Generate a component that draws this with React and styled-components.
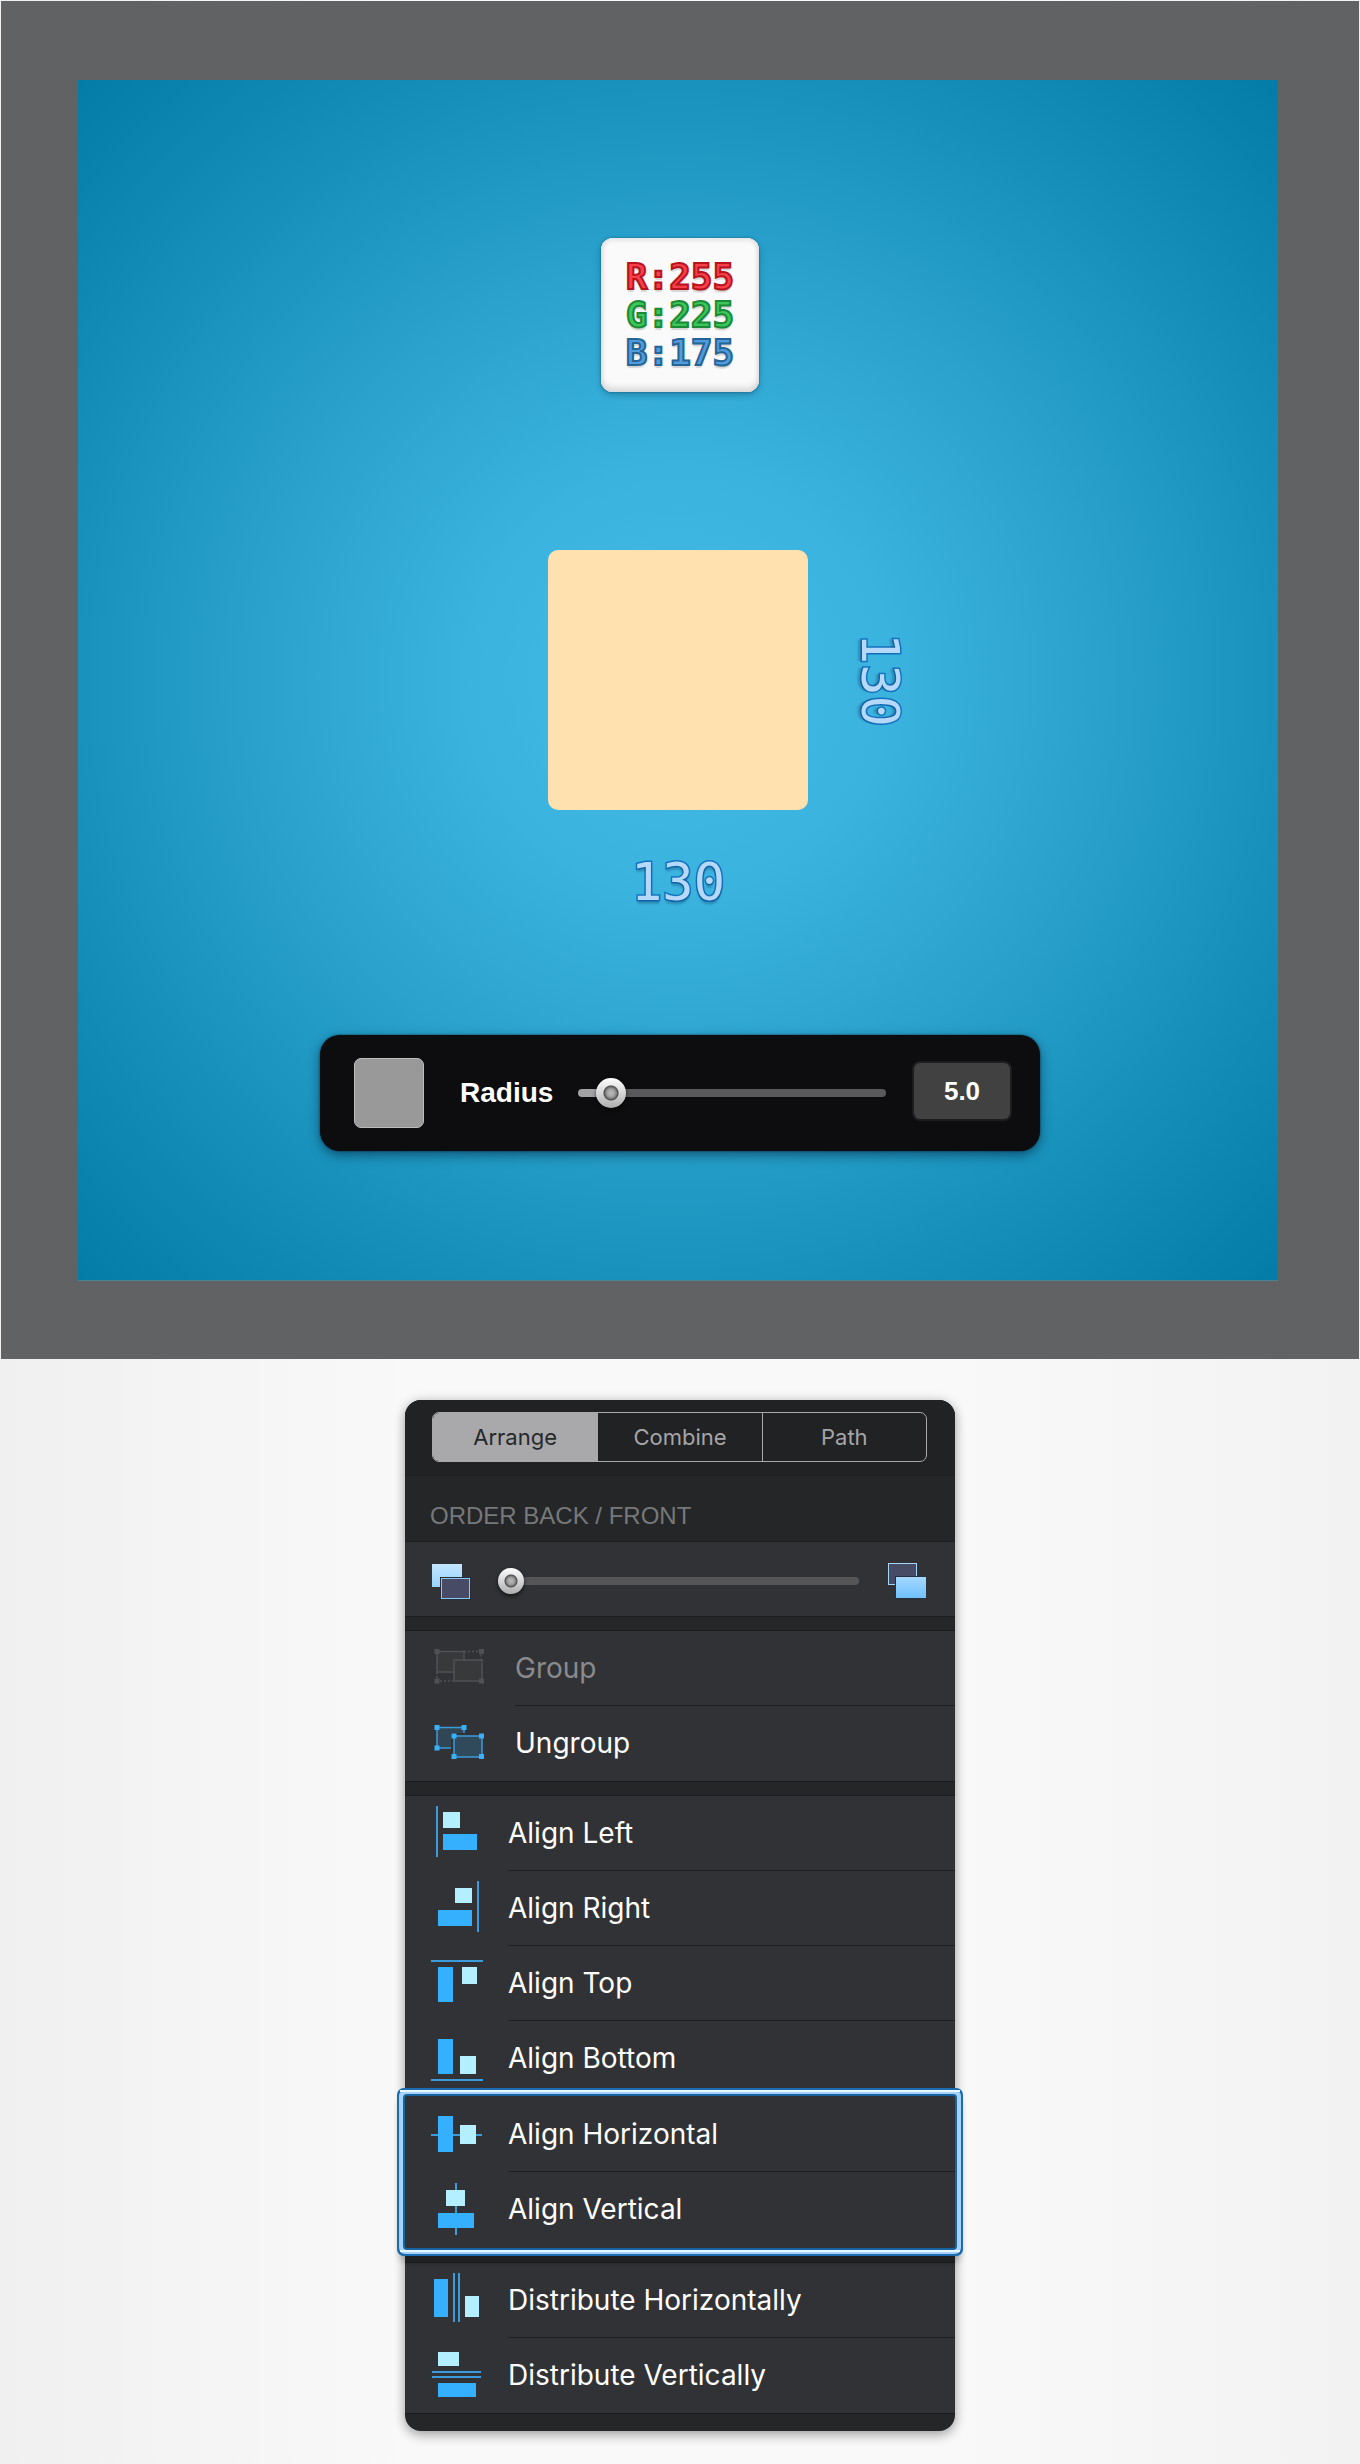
import React, { useState } from "react";
import styled, { createGlobalStyle, css } from "styled-components";

const GlobalStyle = createGlobalStyle`
  *, *::before, *::after { box-sizing: border-box; }
  body {
    margin: 0;
    font-family: Inter, "Liberation Sans", sans-serif;
    background: linear-gradient(90deg, #f0f0f0, #f9f9f9 30%, #f9f9f9 70%, #f2f2f2);
  }
  button, input { font: inherit; margin: 0; }
`;

const Page = styled.main`
  display: flex;
  flex-direction: column;
  align-items: center;
  gap: 41px;
  padding: 1px 1px 32px;
`;

const Stage = styled.section`
  width: 100%;
  padding: 79px 81px 79px 77px;
  background: #616264;
`;

const Canvas = styled.div`
  display: flex;
  flex-direction: column;
  align-items: center;
  padding: 158px 0 129px 4px;
  background: radial-gradient(circle farthest-corner at 50% 50%, #43bbe7 0%, #3bb3df 25%, #29a1cc 50%, #158fb9 75%, #037da8 100%);
  box-shadow: 0 1px 0 #4d8296;
`;

const ColorCard = styled.div`
  display: flex;
  flex-direction: column;
  align-items: center;
  justify-content: center;
  width: 158px;
  height: 154px;
  border-radius: 12px;
  background: #fafafa;
  box-shadow: inset 0 -4px 6px #d8d8d8, inset 0 4px 3px #ececec, inset 2px 0 3px #e8e8e8,
    inset -2px 0 3px #e8e8e8, 0 0 2px rgba(0, 60, 90, 0.7), 0 3px 6px rgba(0, 40, 60, 0.3);
`;

const Outlined = styled.span`
  font-family: "DejaVu Sans Mono", monospace;
  color: ${(p) => p.$fill};
`;

const Channel = styled(Outlined)`
  font-size: 36px;
  line-height: 38px;
  font-weight: 700;
  -webkit-text-stroke: 2px ${(p) => p.$edge};
  text-shadow: 0 3px 1px rgba(0, 0, 0, 0.15);
`;

const Figure = styled.div`
  display: grid;
  grid-template-columns: 60px 260px 60px;
  gap: 42px;
  margin: 158px 4px 123px 0;
  justify-items: center;
  align-items: center;
`;

const Shape = styled.div`
  grid-column: 2;
  width: 260px;
  height: 260px;
  border-radius: 10px;
  background: #ffe1af;
`;

const Dimension = styled(Outlined)`
  font-size: 52px;
  line-height: 60px;
  -webkit-text-stroke: 3px ${(p) => p.$edge};
  paint-order: stroke fill;
  text-shadow: 0 4px 2px rgba(0, 40, 80, 0.25);
  ${(p) =>
    p.$vertical
      ? css`
          writing-mode: vertical-rl;
          text-orientation: sideways;
        `
      : css`
          grid-column: 2;
        `}
`;

const RadiusBar = styled.div`
  display: flex;
  align-items: center;
  width: 100%;
  max-width: 720px;
  height: 116px;
  padding: 0 30px 0 34px;
  border-radius: 20px;
  background: #0d0d0f;
  box-shadow: 0 0 2px rgba(0, 20, 30, 0.8), 0 4px 12px rgba(0, 20, 40, 0.5);
  color: #fff;
  font-family: "Liberation Sans", Arial, sans-serif;
  font-weight: 700;
`;

const Swatch = styled.button`
  flex: none;
  width: 70px;
  height: 70px;
  padding: 0;
  border: 1px solid #bcbcbc;
  border-radius: 7px;
  background: #999;
`;

const RadiusLabel = styled.label`
  margin: 0 25px 0 36px;
  font-size: 28px;
  line-height: 32px;
`;

const thumb = css`
  appearance: none;
  width: ${(p) => p.$thumb}px;
  height: ${(p) => p.$thumb}px;
  border: 0;
  border-radius: 50%;
  background: radial-gradient(circle closest-side, #bcbcbc 0%, #a0a0a0 26%, #777 38%, #4c4c4c 46%, transparent 54%),
    linear-gradient(#fff, #adadad);
  box-shadow: 0 2px 4px rgba(0, 0, 0, 0.6);
`;

const Slider = styled.input.attrs({ type: "range" })`
  appearance: none;
  flex: 1;
  min-width: 0;
  height: ${(p) => p.$thumb}px;
  background: transparent;
  &::-webkit-slider-runnable-track {
    height: 8px;
    border-radius: 4px;
    background: ${(p) =>
      `linear-gradient(90deg, ${p.$filled} ${p.$percent}%, ${p.$track} ${p.$percent}%)`};
  }
  &::-webkit-slider-thumb {
    ${thumb}
    margin-top: ${(p) => (8 - p.$thumb) / 2}px;
  }
`;

const ValueField = styled.input`
  flex: none;
  width: 96px;
  height: 56px;
  margin: 0 0 4px 28px;
  padding: 0;
  border: 0;
  border-radius: 6px;
  background: #414141;
  box-shadow: 0 0 0 2px #1d1d1f;
  color: #fff;
  font-size: 26px;
  text-align: center;
`;

const Panel = styled.section`
  width: 100%;
  max-width: 550px;
  border-radius: 16px;
  background: #252628;
  box-shadow: 0 2px 12px rgba(0, 0, 0, 0.3), 0 6px 12px rgba(0, 0, 0, 0.12);
`;

const PanelHeader = styled.header`
  padding: 12px 28px 13px 27px;
  border-bottom: 1px solid #1e1f20;
  border-radius: 16px 16px 0 0;
  background: #212224;
`;

const Segments = styled.div`
  display: grid;
  grid-template-columns: repeat(3, 1fr);
  height: 50px;
  border: 1px solid #a9a9ab;
  border-radius: 7px;
  overflow: hidden;
`;

const Segment = styled.button`
  padding: 0;
  border: 0;
  background: ${(p) => (p.$active ? "#a9a9ab" : "transparent")};
  color: ${(p) => (p.$active ? "#27282a" : "#a5a5a7")};
  font-size: 22px;
  & + & {
    border-left: 1px solid #a9a9ab;
  }
`;

const SectionTitle = styled.h2`
  margin: 0;
  height: 66px;
  padding: 26px 25px 0;
  border-bottom: 1px solid #1b1c1d;
  color: #77787a;
  font-family: "Liberation Sans", Arial, sans-serif;
  font-size: 24px;
  font-weight: 400;
  line-height: 28px;
`;

const OrderRow = styled.div`
  display: flex;
  align-items: center;
  height: 74px;
  padding: 4px 29px 0 26px;
  gap: 27px;
  background: #313235;
`;

const Divider = styled.div`
  height: 15px;
  border: solid #1b1c1d;
  border-width: 1px 0;
`;

const Footer = styled.div`
  height: 18px;
  border-top: 1px solid #1b1c1d;
`;

const ActionList = styled.div`
  background: #313235;
`;

const Highlight = styled(ActionList)`
  position: relative;
  padding: 1px 0;
  border-radius: 2px;
  box-shadow: 0 0 0 2px #17639f, 0 0 0 6px #a6d1fb, 0 0 0 8px #1b6cb0, 0 8px 6px 6px rgba(0, 0, 0, 0.2);
  &::after {
    content: "";
    position: absolute;
    inset: -6px -5px -4px;
    border: solid #e9f8ff;
    border-width: 2px 0;
    pointer-events: none;
  }
`;

const ActionButton = styled.button`
  display: flex;
  align-items: center;
  width: 100%;
  height: 75px;
  padding: 0 0 0 25px;
  gap: ${(p) => (p.$wide ? 29 : 22)}px;
  border: 0;
  background: transparent;
  color: ${(p) => (p.disabled ? "#8a8a8d" : "#fff")};
  font-size: 28px;
  text-align: left;
`;

const ActionLabel = styled.span`
  flex: 1;
  line-height: 74px;
  border-bottom: 1px solid ${(p) => (p.$last ? "transparent" : "#1d1e20")};
`;

const IconBox = styled.svg`
  flex: none;
  display: block;
`;

const BLUE = "#35afff";
const PALE = "#b3efff";
const LINE = "#3b9bdb";

/* Each alignment icon: [x, y, width, height, colour] */
const barIcons = {
  left: [[6, 10, 2, 51, LINE], [13, 16, 17, 16, PALE], [13, 38, 34, 16, BLUE]],
  right: [[47, 10, 2, 51, LINE], [25, 17, 17, 15, PALE], [8, 39, 34, 16, BLUE]],
  top: [[1, 14, 52, 2, LINE], [8, 21, 15, 35, BLUE], [32, 21, 15, 17, PALE]],
  bottom: [[8, 18, 15, 35, BLUE], [30, 35, 16, 18, PALE], [1, 58, 52, 2, LINE]],
  horizontal: [[1, 37, 51, 2, LINE], [8, 19, 15, 36, BLUE], [30, 28, 16, 19, PALE]],
  vertical: [[25, 11, 2, 52, LINE], [16, 18, 19, 16, PALE], [8, 41, 36, 15, BLUE]],
  spreadX: [[4, 16, 14, 38, BLUE], [23, 10, 2, 49, LINE], [28, 10, 2, 49, LINE], [35, 33, 14, 21, PALE]],
  spreadY: [[8, 14, 21, 14, PALE], [2, 33, 49, 2, LINE], [2, 38, 49, 2, LINE], [8, 45, 38, 14, BLUE]],
};

function BarIcon({ name }) {
  return (
    <IconBox width="56" height="75" viewBox="0 0 56 75" aria-hidden="true">
      {barIcons[name].map(([x, y, w, h, fill]) => (
        <rect key={`${x}-${y}`} x={x} y={y} width={w} height={h} fill={fill} />
      ))}
    </IconBox>
  );
}

function Handles({ points, fill }) {
  return points.map(([x, y]) => (
    <rect key={`${x}-${y}`} x={x - 2.5} y={y - 2.5} width="5" height="5" fill={fill} />
  ));
}

function GroupIcon() {
  return (
    <IconBox width="56" height="75" viewBox="0 0 56 75" aria-hidden="true">
      <g fill="#38393b" stroke="#505153" strokeWidth="1.5">
        <rect x="7" y="20.5" width="27" height="20.5" />
        <rect x="24" y="29" width="28" height="21" />
        <path d="M34 20.5H51V29M7 41V50H24" fill="none" strokeDasharray="2 2" />
      </g>
      <Handles fill="#505153" points={[[7, 20.5], [51.5, 20.5], [7, 50], [51.5, 50]]} />
    </IconBox>
  );
}

function UngroupIcon() {
  return (
    <IconBox width="56" height="75" viewBox="0 0 56 75" aria-hidden="true">
      <rect x="7" y="21.5" width="27" height="20.5" fill="#304654" stroke={LINE} strokeWidth="1.5" />
      <rect x="21" y="27" width="34" height="27" fill="#313235" />
      <rect x="24" y="30" width="28" height="21" fill="#304a5c" stroke={LINE} strokeWidth="1.5" />
      <Handles
        fill="#38b0fb"
        points={[[7, 21.5], [34, 21.5], [7, 42], [24, 30], [51.5, 30], [24, 50.5], [51.5, 50.5]]}
      />
    </IconBox>
  );
}

function BackIcon() {
  return (
    <IconBox width="40" height="38" viewBox="0 0 40 38" aria-hidden="true">
      <defs>
        <linearGradient id="back-fill" x1="0" y1="0" x2="0" y2="1">
          <stop offset="0" stopColor="#c2e6ff" />
          <stop offset="1" stopColor="#98d3fb" />
        </linearGradient>
      </defs>
      <rect x="1" y="2" width="30" height="23" fill="url(#back-fill)" />
      <rect x="9" y="15" width="31" height="23" fill="#26303c" />
      <rect x="10.5" y="16.5" width="28" height="20" fill="#484b66" stroke="#8ac8f4" />
    </IconBox>
  );
}

function FrontIcon() {
  return (
    <IconBox width="40" height="38" viewBox="0 0 40 38" aria-hidden="true">
      <defs>
        <linearGradient id="front-fill" x1="0" y1="0" x2="0" y2="1">
          <stop offset="0" stopColor="#a4d7ff" />
          <stop offset="1" stopColor="#70c1ff" />
        </linearGradient>
      </defs>
      <rect x="2.5" y="1.5" width="28" height="21" fill="#484b66" stroke="#a9d4fa" />
      <rect x="9" y="14" width="31" height="23" fill="#26303c" />
      <rect x="10" y="15" width="30" height="21" fill="url(#front-fill)" />
    </IconBox>
  );
}

const channels = [
  ["R:255", "#f8404a", "#b8121c"],
  ["G:225", "#3cc65a", "#1a8a36"],
  ["B:175", "#539cdb", "#246496"],
];

const tabs = ["Arrange", "Combine", "Path"];

function Action({ label, icon, last, wide, disabled }) {
  return (
    <ActionButton type="button" $wide={wide} disabled={disabled}>
      {icon}
      <ActionLabel $last={last}>{label}</ActionLabel>
    </ActionButton>
  );
}

export default function App() {
  const [radius, setRadius] = useState(5);
  const [order, setOrder] = useState(0);
  const [tab, setTab] = useState("Arrange");

  return (
    <>
      <GlobalStyle />
      <Page>
        <Stage>
          <Canvas>
            <ColorCard>
              {channels.map(([text, fill, edge]) => (
                <Channel key={text} $fill={fill} $edge={edge}>
                  {text}
                </Channel>
              ))}
            </ColorCard>
            <Figure>
              <Shape />
              <Dimension $vertical $fill="#b5d8fb" $edge="#1474c0">130</Dimension>
              <Dimension $fill="#b5d8fb" $edge="#1474c0">130</Dimension>
            </Figure>
            <RadiusBar>
              <Swatch type="button" aria-label="Fill" />
              <RadiusLabel htmlFor="radius">Radius</RadiusLabel>
              <Slider
                id="radius"
                min="0"
                max="77"
                value={radius}
                onChange={(e) => setRadius(Number(e.target.value))}
                $thumb={30}
                $filled="#a2a2a4"
                $track="#59595b"
                $percent={10}
              />
              <ValueField aria-label="Radius value" readOnly value={radius.toFixed(1)} />
            </RadiusBar>
          </Canvas>
        </Stage>

        <Panel>
          <PanelHeader>
            <Segments>
              {tabs.map((name) => (
                <Segment key={name} type="button" $active={tab === name} onClick={() => setTab(name)}>
                  {name}
                </Segment>
              ))}
            </Segments>
          </PanelHeader>
          <SectionTitle>ORDER BACK / FRONT</SectionTitle>
          <OrderRow>
            <BackIcon />
            <Slider
              aria-label="Order back / front"
              min="0"
              max="10"
              value={order}
              onChange={(e) => setOrder(Number(e.target.value))}
              $thumb={26}
              $filled="#555557"
              $track="#555557"
              $percent={0}
            />
            <FrontIcon />
          </OrderRow>
          <Divider />
          <ActionList>
            <Action wide disabled label="Group" icon={<GroupIcon />} />
            <Action wide last label="Ungroup" icon={<UngroupIcon />} />
          </ActionList>
          <Divider />
          <ActionList>
            <Action label="Align Left" icon={<BarIcon name="left" />} />
            <Action label="Align Right" icon={<BarIcon name="right" />} />
            <Action label="Align Top" icon={<BarIcon name="top" />} />
            <Action last label="Align Bottom" icon={<BarIcon name="bottom" />} />
          </ActionList>
          <Highlight>
            <Action label="Align Horizontal" icon={<BarIcon name="horizontal" />} />
            <Action last label="Align Vertical" icon={<BarIcon name="vertical" />} />
          </Highlight>
          <Divider />
          <ActionList>
            <Action label="Distribute Horizontally" icon={<BarIcon name="spreadX" />} />
            <Action last label="Distribute Vertically" icon={<BarIcon name="spreadY" />} />
          </ActionList>
          <Footer />
        </Panel>
      </Page>
    </>
  );
}
